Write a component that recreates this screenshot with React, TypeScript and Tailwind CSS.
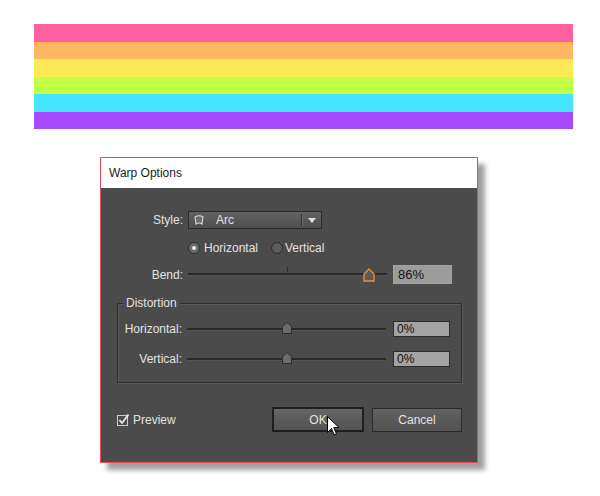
import React from 'react'

const stripes = ['#ff5f9e', '#ffb860', '#ffe957', '#c2ff43', '#47e6ff', '#a54aff']

function Slider({ thumb, orange, tick }: { thumb: number; orange?: boolean; tick?: boolean }) {
  return (
    <div className="relative w-[199px] h-full flex items-center">
      <div className="w-full h-[3px] bg-[#2a2a2a] border-b border-[#555]" />
      {tick && <div className="absolute left-[99px] top-[2px] w-px h-[5px] bg-[#2c2c2c]" />}
      {orange ? (
        <svg className="absolute top-[3px]" style={{ left: thumb - 6 }} width="12" height="14" viewBox="0 0 12 14">
          <path d="M1 13 L1 6 L6 1 L11 6 L11 13 Z" fill="#5b5b5b" stroke="#f29324" strokeWidth="1.3" />
        </svg>
      ) : (
        <svg className="absolute top-[1px]" style={{ left: thumb - 5 }} width="10" height="12" viewBox="0 0 10 12">
          <path d="M0.5 11.5 L0.5 4.5 L5 0.5 L9.5 4.5 L9.5 11.5 Z" fill="#6b6b6b" stroke="#2c2c2c" strokeWidth="1" />
        </svg>
      )}
    </div>
  )
}

function Field({ value, orange }: { value: string; orange?: boolean }) {
  return (
    <div
      className={
        orange
          ? 'w-[59px] h-[19px] border border-[#f29324] bg-[#9c9c9c] pl-[4px] flex items-center text-[13px] text-[#111]'
          : 'w-[57px] h-[16px] border border-[#2e2e2e] bg-[#a3a3a3] pl-[3px] flex items-center text-[12px] text-[#111]'
      }
    >
      {value}
    </div>
  )
}

export default function App() {
  return (
    <div className="w-[600px] h-[496px] bg-white pt-[24px] overflow-hidden font-['Liberation_Sans',Arial,sans-serif]">
      {/* Rainbow */}
      <div className="ml-[34px] w-[539px] flex flex-col">
        {stripes.map((c, i) => (
          <div key={i} className="h-[17.5px]" style={{ backgroundColor: c }} />
        ))}
      </div>

      {/* Dialog */}
      <div className="relative mt-[28px] ml-[100px] w-[378px] h-[306px] border border-[#e84d5d] flex flex-col shadow-[7px_7px_5px_rgba(0,0,0,0.38)]">
        <div className="h-[30px] bg-white pl-[8px] flex items-center text-[12px] text-[#1b1b1b]">Warp Options</div>

        <div className="flex-1 bg-[#4b4b4b] pt-[23px] pl-[16px] pr-[15px] flex flex-col text-[12px] text-[#e2e2e2]">
          {/* Style */}
          <div className="h-[18px] flex items-center -ml-[16px]">
            <div className="w-[82px] text-right">Style:</div>
            <div className="ml-[5px] w-[134px] h-[18px] border border-[#2b2b2b] bg-gradient-to-b from-[#626262] to-[#4f4f4f] flex items-center">
              <svg className="ml-[5px]" width="10" height="10" viewBox="0 0 10 10">
                <path d="M1 2 Q5 -0.5 9 2 L8 9 Q5 7 2 9 Z" fill="#6e6e6e" stroke="#d8d8d8" strokeWidth="1.1" />
              </svg>
              <span className="ml-[12px]">Arc</span>
              <div className="ml-auto w-px h-[12px] bg-[#2e2e2e] border-r border-[#6a6a6a] box-content" />
              <svg className="ml-[5px] mr-[5px]" width="8" height="5" viewBox="0 0 8 5">
                <path d="M0 0 L8 0 L4 5 Z" fill="#dcdcdc" />
              </svg>
            </div>
          </div>

          {/* Radios */}
          <div className="mt-[11px] h-[16px] flex items-center pl-[71px]">
            <div className="w-[12px] h-[12px] rounded-full border border-[#2c2c2c] bg-[#6a6a6a] flex items-center justify-center">
              <div className="w-[4px] h-[4px] rounded-full bg-[#f0f0f0]" />
            </div>
            <span className="ml-[4px]">Horizontal</span>
            <div className="ml-[13px] w-[12px] h-[12px] rounded-full border border-[#2c2c2c] bg-[#5c5c5c]" />
            <span className="ml-[2px]">Vertical</span>
          </div>

          {/* Bend */}
          <div className="mt-[9px] h-[19px] flex items-center -ml-[16px]">
            <div className="w-[82px] text-right">Bend:</div>
            <div className="ml-[5px] h-full">
              <Slider thumb={181} orange tick />
            </div>
            <div className="ml-[6px]">
              <Field value="86%" orange />
            </div>
          </div>

          {/* Distortion */}
          <div className="relative mt-[19px] w-[345px] h-[80px] border border-[#2e2e2e] shadow-[inset_1px_1px_0_#5a5a5a,1px_1px_0_#5a5a5a] pt-[17px] flex flex-col">
            <div className="absolute -top-[8px] left-[5px] px-[3px] bg-[#4b4b4b] leading-[15px]">Distortion</div>
            <div className="h-[16px] flex items-center">
              <div className="w-[64px] text-right">Horizontal:</div>
              <div className="ml-[5px] h-full">
                <Slider thumb={100} />
              </div>
              <div className="ml-[7px]">
                <Field value="0%" />
              </div>
            </div>
            <div className="mt-[14px] h-[16px] flex items-center">
              <div className="w-[64px] text-right">Vertical:</div>
              <div className="ml-[5px] h-full">
                <Slider thumb={100} />
              </div>
              <div className="ml-[7px]">
                <Field value="0%" />
              </div>
            </div>
          </div>

          {/* Bottom */}
          <div className="mt-[24px] h-[25px] flex items-center">
            <svg width="13" height="12" viewBox="0 0 13 12">
              <rect x="0.5" y="1.5" width="10" height="10" fill="#4b4b4b" stroke="#cfcfcf" strokeWidth="1" />
              <path d="M2.5 6 L5 9 L11.5 0.5" fill="none" stroke="#e6e6e6" strokeWidth="1.8" />
            </svg>
            <span className="ml-[3px]">Preview</span>
            <div className="ml-auto w-[92px] h-[25px] border-2 border-[#1f1f1f] bg-gradient-to-b from-[#666] to-[#525252] flex items-center justify-center">
              OK
            </div>
            <div className="ml-[8px] w-[90px] h-[24px] border border-[#2a2a2a] bg-gradient-to-b from-[#626262] to-[#515151] flex items-center justify-center">
              Cancel
            </div>
          </div>
        </div>

        {/* Cursor */}
        <svg className="absolute left-[226px] top-[258px]" width="13" height="21" viewBox="0 0 13 21">
          <path d="M0.5 0.5 L0.5 16.5 L4.5 12.5 L7.2 18.8 L9.4 17.8 L6.8 11.6 L12 11.6 Z" fill="#fff" stroke="#000" strokeWidth="1" strokeLinejoin="round" />
        </svg>
      </div>
    </div>
  )
}
